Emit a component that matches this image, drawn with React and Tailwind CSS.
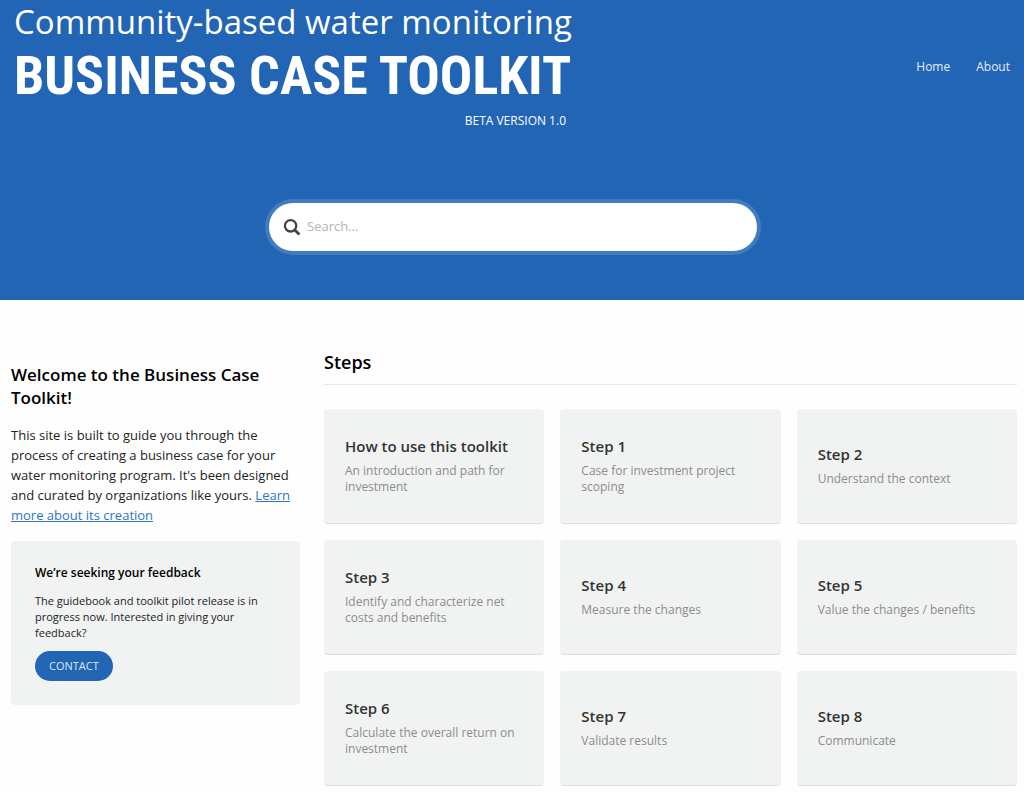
import React, { useState } from "react";

const steps = [
  {
    title: "How to use this toolkit",
    text: "An introduction and path for investment",
  },
  { title: "Step 1", text: "Case for investment project scoping" },
  { title: "Step 2", text: "Understand the context" },
  { title: "Step 3", text: "Identify and characterize net costs and benefits" },
  { title: "Step 4", text: "Measure the changes" },
  { title: "Step 5", text: "Value the changes / benefits" },
  { title: "Step 6", text: "Calculate the overall return on investment" },
  { title: "Step 7", text: "Validate results" },
  { title: "Step 8", text: "Communicate" },
];

function Logo() {
  return (
    <a href="#" className="block w-[560px] text-white">
      <span className="block text-[33px] leading-[44px] whitespace-nowrap">
        Community-based water monitoring
      </span>
      <span className="block font-['Roboto_Condensed','Liberation_Sans_Narrow','Liberation_Sans',sans-serif] text-[54px] leading-[64px] font-bold whitespace-nowrap">
        BUSINESS CASE TOOLKIT
      </span>
      <span className="block pr-2 text-right text-[12px] leading-[26px]">
        BETA VERSION 1.0
      </span>
    </a>
  );
}

function SearchForm() {
  const [query, setQuery] = useState("");

  return (
    <form
      role="search"
      onSubmit={(e) => e.preventDefault()}
      className="mx-auto flex h-12 w-full max-w-[488px] items-center gap-1.5 rounded-full bg-white px-3.5 ring-4 ring-white/15"
    >
      <label htmlFor="search" className="text-[#444]">
        <svg
          viewBox="0 0 18 18"
          className="h-[18px] w-[18px]"
          fill="none"
          stroke="currentColor"
          role="img"
          aria-label="Search"
        >
          <circle cx="7.6" cy="7.8" r="5.7" strokeWidth="2.3" />
          <path d="M11.8 12 16.4 16.4" strokeWidth="2.8" />
        </svg>
      </label>
      <input
        id="search"
        type="text"
        value={query}
        onChange={(e) => setQuery(e.target.value)}
        placeholder="Search..."
        className="min-w-0 flex-1 bg-transparent text-[13px] text-[#333] outline-none placeholder:text-[#b3b3b3]"
      />
    </form>
  );
}

function Header() {
  return (
    <header className="min-h-[300px] bg-[#2265b4] pb-12">
      <div className="flex items-center justify-between px-3.5">
        <Logo />
        <nav className="flex gap-[26px] text-[12px] text-[#e6eef8]">
          <a href="#">Home</a>
          <a href="#">About</a>
        </nav>
      </div>
      <div className="pt-[69px] pr-[14px] pl-4">
        <SearchForm />
      </div>
    </header>
  );
}

function Sidebar() {
  return (
    <aside className="w-[289px] shrink-0 pt-[15px]">
      <h2 className="text-[17px] leading-[23px] font-semibold text-black">
        Welcome to the Business Case Toolkit!
      </h2>
      <p className="mt-4 text-[13px] leading-[20px] text-[#222]">
        This site is built to guide you through the process of creating a
        business case for your water monitoring program. It's been designed and
        curated by organizations like yours.{" "}
        <a href="#" className="text-[#2f75c5] underline">
          Learn more about its creation
        </a>
      </p>
      <section className="mt-4 rounded bg-[#f1f3f3] p-6">
        <h3 className="text-[12px] leading-4 font-semibold text-black">
          We’re seeking your feedback
        </h3>
        <p className="mt-3 text-[11px] leading-4 text-[#222]">
          The guidebook and toolkit pilot release is in progress now. Interested
          in giving your feedback?
        </p>
        <button
          type="button"
          className="mt-2.5 h-[30px] rounded-full bg-[#2265b4] px-3.5 text-[11px] text-[#dce8f5]"
        >
          CONTACT
        </button>
      </section>
    </aside>
  );
}

function StepCard({ title, text }) {
  return (
    <a
      href="#"
      className="flex min-h-[115px] flex-col justify-center rounded border-b border-[#dddfdf] bg-[#f1f3f3] px-[21px]"
    >
      <h3 className="text-[15px] leading-[18px] font-semibold text-[#333]">
        {title}
      </h3>
      <p className="mt-2 text-[12px] leading-4 text-[#8c8c8c]">{text}</p>
    </a>
  );
}

function App() {
  return (
    <div className="min-h-screen bg-[#fefefe] font-['Open_Sans',sans-serif]">
      <Header />
      <main className="flex items-start gap-6 pt-12 pr-[7px] pb-1.5 pl-[11px]">
        <Sidebar />
        <section className="min-w-0 flex-1">
          <h2 className="border-b border-[#e6e6e6] pt-0.5 pb-2.5 text-[18px] leading-6 font-semibold text-black">
            Steps
          </h2>
          <div className="mt-6 grid grid-cols-3 gap-4">
            {steps.map((step) => (
              <StepCard key={step.title} title={step.title} text={step.text} />
            ))}
          </div>
        </section>
      </main>
    </div>
  );
}

export default App;
